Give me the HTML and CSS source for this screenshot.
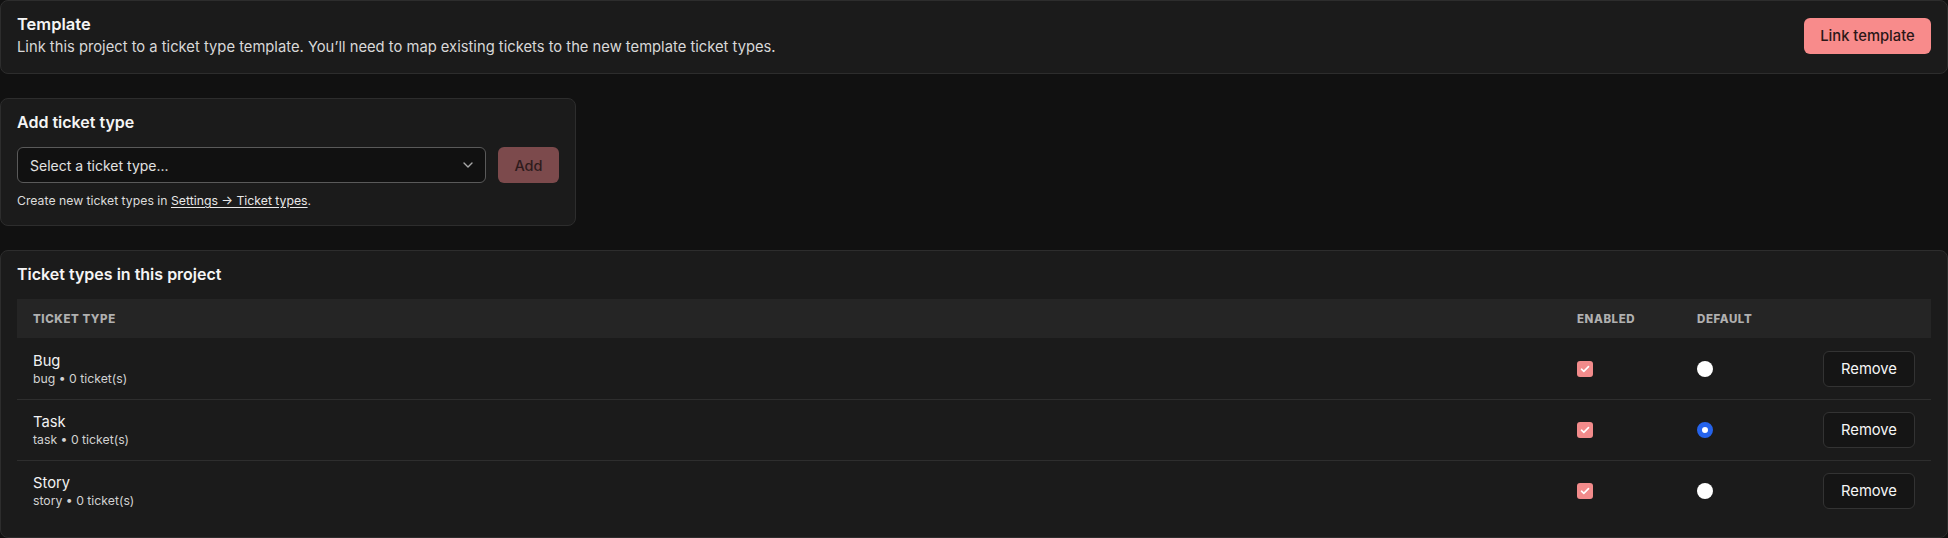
FILE: index.html
```html
<!DOCTYPE html>
<html lang="en">
<head>
<meta charset="utf-8">
<title>Ticket types</title>
<link rel="stylesheet" href="styles.css">
</head>
<body>
<main class="page">
  <section class="card card-template">
    <div class="template-text">
      <h2 class="card-title">Template</h2>
      <p class="card-desc">Link this project to a ticket type template. You’ll need to map existing tickets to the new template ticket types.</p>
    </div>
    <button class="btn btn-primary">Link template</button>
  </section>

  <section class="card card-add">
    <h2 class="card-title">Add ticket type</h2>
    <div class="add-row">
      <div class="select">
        <span class="select-label">Select a ticket type...</span>
        <svg class="chevron" width="10" height="6" viewBox="0 0 10 6" aria-hidden="true"><path d="M1 1l4 4 4-4" fill="none" stroke="#a8a8a8" stroke-width="1.4" stroke-linecap="round" stroke-linejoin="round"/></svg>
      </div>
      <button class="btn btn-add">Add</button>
    </div>
    <p class="helper">Create new ticket types in <a class="helper-link" href="#">Settings → Ticket types</a>.</p>
  </section>

  <section class="card card-types">
    <h2 class="card-title">Ticket types in this project</h2>
    <div class="table">
      <div class="trow thead">
        <div class="cell">Ticket type</div>
        <div class="cell">Enabled</div>
        <div class="cell">Default</div>
        <div class="cell"></div>
      </div>
      <div class="trow tbody-row">
        <div class="cell name-cell">
          <div class="type-name">Bug</div>
          <div class="type-sub">bug • 0 ticket(s)</div>
        </div>
        <div class="cell"><span class="checkbox"><svg width="10" height="8" viewBox="0 0 10 8"><path d="M1.5 4.2l2.3 2.2L8.5 1.6" fill="none" stroke="#fff" stroke-width="1.6" stroke-linecap="round" stroke-linejoin="round"/></svg></span></div>
        <div class="cell"><span class="radio"></span></div>
        <div class="cell action-cell"><button class="btn btn-remove">Remove</button></div>
      </div>
      <div class="trow tbody-row">
        <div class="cell name-cell">
          <div class="type-name">Task</div>
          <div class="type-sub">task • 0 ticket(s)</div>
        </div>
        <div class="cell"><span class="checkbox"><svg width="10" height="8" viewBox="0 0 10 8"><path d="M1.5 4.2l2.3 2.2L8.5 1.6" fill="none" stroke="#fff" stroke-width="1.6" stroke-linecap="round" stroke-linejoin="round"/></svg></span></div>
        <div class="cell"><span class="radio radio-on"></span></div>
        <div class="cell action-cell"><button class="btn btn-remove">Remove</button></div>
      </div>
      <div class="trow tbody-row">
        <div class="cell name-cell">
          <div class="type-name">Story</div>
          <div class="type-sub">story • 0 ticket(s)</div>
        </div>
        <div class="cell"><span class="checkbox"><svg width="10" height="8" viewBox="0 0 10 8"><path d="M1.5 4.2l2.3 2.2L8.5 1.6" fill="none" stroke="#fff" stroke-width="1.6" stroke-linecap="round" stroke-linejoin="round"/></svg></span></div>
        <div class="cell"><span class="radio"></span></div>
        <div class="cell action-cell"><button class="btn btn-remove">Remove</button></div>
      </div>
    </div>
  </section>
</main>
</body>
</html>
```

FILE: styles.css
```css
* { box-sizing: border-box; }
html, body {
  margin: 0;
  padding: 0;
  background: #111111;
  color: #f2f2f2;
  font-family: "Inter", "Noto Sans", sans-serif;
  overflow: hidden;
}
.page {
  display: flex;
  flex-direction: column;
  align-items: flex-start;
  gap: 24px;
}
.card {
  background: #1b1b1b;
  border: 1px solid #2d2d2d;
  border-radius: 8px;
  padding: 14px 16px 16px;
  width: 100%;
}
.card-title {
  margin: 0;
  font-size: 16px;
  line-height: 18px;
  font-weight: 600;
  color: #f5f5f5;
}
.card-template {
  display: flex;
  align-items: center;
  justify-content: space-between;
}
.template-text .card-title {
  font-size: 16.5px;
}
.card-desc {
  margin: 4px 0 0;
  font-size: 14.75px;
  line-height: 20px;
  color: #d8d8d8;
}
.btn {
  font-family: inherit;
  font-size: 14px;
  border-radius: 6px;
  height: 36px;
  cursor: pointer;
}
.btn-primary {
  background: #f88b8b;
  color: #2b1717;
  border: none;
  padding: 0 12px;
  width: 127px;
  font-size: 14.75px;
  font-weight: 500;
}
.card-add {
  width: 576px;
}
.add-row {
  display: flex;
  gap: 12px;
  margin-top: 16px;
}
.select {
  flex: 1;
  height: 36px;
  background: #111111;
  border: 1px solid #5a5a5a;
  border-radius: 6px;
  display: flex;
  align-items: center;
  justify-content: space-between;
  padding: 0 12px 0 12px;
  font-size: 14px;
  color: #e2e2e2;
}
.btn-add {
  width: 61px;
  background: #7c4a4c;
  color: #2e1b1c;
  border: none;
  font-size: 14.5px;
  font-weight: 500;
}
.helper {
  margin: 10px 0 0;
  font-size: 12.25px;
  line-height: 16px;
  color: #dcdcdc;
}
.helper-link {
  color: #e8e8e8;
  text-decoration: underline;
  text-underline-offset: 2px;
}
.table {
  margin-top: 16px;
}
.trow {
  display: grid;
  grid-template-columns: 1fr 120px 126px 124px;
  align-items: center;
}
.cell {
  padding: 0 16px;
}
.thead {
  background: #252525;
  height: 39px;
  font-size: 11.5px;
  font-weight: 800;
  letter-spacing: 0.05em;
  text-transform: uppercase;
  color: #b0b0b0;
}
.tbody-row {
  height: 61px;
  border-top: 1px solid #2e2e2e;
}
.thead + .tbody-row {
  border-top: none;
  height: 61px;
}
.type-name {
  font-size: 14.75px;
  line-height: 20px;
  color: #f2f2f2;
  font-weight: 400;
}
.type-sub {
  font-size: 12.25px;
  line-height: 16px;
  color: #d2d2d2;
}
.checkbox {
  display: flex;
  align-items: center;
  justify-content: center;
  width: 16px;
  height: 16px;
  border-radius: 3px;
  background: #f28b8b;
}
.radio {
  display: block;
  width: 16px;
  height: 16px;
  border-radius: 50%;
  background: #ffffff;
}
.radio-on {
  border: 5px solid #2563eb;
  background: #ffffff;
}
.action-cell {
  display: flex;
  justify-content: flex-end;
}
.btn-remove {
  width: 92px;
  background: #151515;
  color: #f5f5f5;
  border: 1px solid #333333;
  font-size: 14.75px;
}
```
